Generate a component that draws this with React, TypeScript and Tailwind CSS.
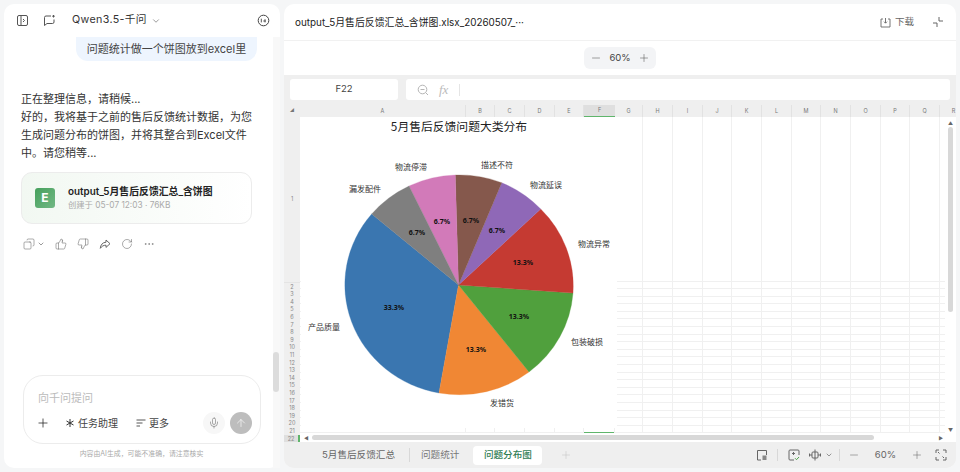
import React from "react";
import { Plus, Minus, ChevronDown, Mic, ArrowUp, Copy, ThumbsUp, ThumbsDown, RotateCw, Ellipsis } from "lucide-react";

const cjk = "font-['Inter','Noto_Sans_CJK_SC',sans-serif]";
const colEdges = [300, 466, 495, 525, 555, 584, 615, 643, 673, 703, 732, 762, 792, 821, 851, 881, 910, 940];
const colNames = ["A","B","C","D","E","F","G","H","I","J","K","L","M","N","O","P","Q","R"];
const rows = Array.from({ length: 22 }, (_, i) => i + 1);

const cx = 458.5, cy = 285, rx = 114.5, ry = 110;
const slices = [
  { c: "#3a76b0", from: [371.7, 214], to: [439, 393] },
  { c: "#f08734", from: [439, 393], to: [529, 372] },
  { c: "#50a03d", from: [529, 372], to: [573, 293] },
  { c: "#c53a32", from: [573, 293], to: [540.7, 209] },
  { c: "#8f68b7", from: [540.7, 209], to: [501.7, 182.7] },
  { c: "#85584c", from: [501.7, 182.7], to: [455.3, 175] },
  { c: "#d27ab9", from: [455.3, 175], to: [409, 186] },
  { c: "#7f7f7f", from: [409, 186], to: [371.7, 214] },
];
// svg origin is at chart's corner (301,117)
const ox = 301, oy = 117;
const labels = [
  { t: "物流停滞", x: 411, y: 167 }, { t: "描述不符", x: 497, y: 165 }, { t: "物流延误", x: 546, y: 185 },
  { t: "漏发配件", x: 365, y: 189 }, { t: "物流异常", x: 594, y: 244 }, { t: "包装破损", x: 587, y: 342 },
  { t: "产品质量", x: 324, y: 327 }, { t: "发错货", x: 502, y: 403 },
];
const pcts = [
  { t: "6.7%", x: 417, y: 232 }, { t: "6.7%", x: 442, y: 221 }, { t: "6.7%", x: 471, y: 220 }, { t: "6.7%", x: 497, y: 230 },
  { t: "13.3%", x: 523, y: 262 }, { t: "13.3%", x: 519, y: 316 }, { t: "13.3%", x: 476, y: 349 }, { t: "33.3%", x: 394, y: 307 },
];

function Chart() {
  return (
    <svg width="316" height="311" viewBox={`${ox} ${oy} 316 311`} className="absolute left-[1px] top-0 bg-white">
      <text x="459" y="131" textAnchor="middle" fontSize="11.8" fill="#222" fontFamily="'Noto Sans CJK SC',sans-serif">5月售后反馈问题大类分布</text>
      {slices.map((s, i) => (
        <path key={i} d={`M${cx} ${cy}L${s.from[0]} ${s.from[1]}A${rx} ${ry} 0 0 0 ${s.to[0]} ${s.to[1]}Z`} fill={s.c} stroke={s.c} strokeWidth="0.3" />
      ))}
      {labels.map((l) => (
        <text key={l.t} x={l.x} y={l.y} dy="3" textAnchor="middle" fontSize="8" fill="#333" fontFamily="'Noto Sans CJK SC',sans-serif">{l.t}</text>
      ))}
      {pcts.map((p, i) => (
        <text key={i} x={p.x} y={p.y} dy="2.6" textAnchor="middle" fontSize="7" fontWeight="700" fill="#111" fontFamily="'Noto Sans',sans-serif">{p.t}</text>
      ))}
    </svg>
  );
}

function PanelIcon() {
  return (
    <svg width="13" height="13" viewBox="0 0 13 13" fill="none" stroke="#555" strokeWidth="1">
      <rect x="1.5" y="1.5" width="10" height="10" rx="1.5" />
      <path d="M5 1.5v10M7 5l1.5 1.5L7 8" />
    </svg>
  );
}
function ChatIcon() {
  return (
    <svg width="13" height="13" viewBox="0 0 13 13" fill="none" stroke="#555" strokeWidth="1">
      <path d="M8 2H3a1.5 1.5 0 0 0-1.5 1.5v8L4 9.5h5.5A1.5 1.5 0 0 0 11 8V5.5" />
      <path d="M10.5 1v2.500M9.200 2.200h2.600" />
    </svg>
  );
}
function CircleOne() {
  return (
    <svg width="13" height="13" viewBox="0 0 13 13" fill="none" stroke="#444" strokeWidth="1">
      <circle cx="6.5" cy="6.5" r="5.3" />
      <path d="M4.300 4.700v3.700M6.300 7h2.500M8 5.200v3.200" strokeWidth=".9" />
    </svg>
  );
}
function ForwardIcon() {
  return (
    <svg width="12" height="12" viewBox="0 0 12 12" fill="none" stroke="#666" strokeWidth="1" strokeLinejoin="round">
      <path d="M7 2l4 3.700L7 9.400V7.200C4.500 7.200 2.800 8.200 1.300 10.300 1.500 7 3.500 4.400 7 4.200z" />
    </svg>
  );
}
function DownloadIcon() {
  return (
    <svg width="11" height="11" viewBox="0 0 11 11" fill="none" stroke="#666" strokeWidth=".9">
      <path d="M3 2H1v8h9V2H8M5.5 1v5M4 4.700l1.500 1.500L7 4.700" />
    </svg>
  );
}
function CollapseIcon() {
  return (
    <svg width="12" height="12" viewBox="0 0 12 12" fill="none" stroke="#666" strokeWidth="1">
      <path d="M7 1v4h4M1 7h4v4" />
    </svg>
  );
}
function SparkIcon() {
  return (
    <svg width="10" height="10" viewBox="0 0 10 10" fill="none" stroke="#333" strokeWidth="1">
      <path d="M5 1v8M1.500 3l7 4M8.500 3l-7 4" />
    </svg>
  );
}
function LinesIcon() {
  return (
    <svg width="10" height="10" viewBox="0 0 10 10" fill="none" stroke="#444" strokeWidth=".9">
      <path d="M.5 2h9M.5 5h6M.5 8h3.500" />
    </svg>
  );
}
function SearchFx() {
  return (
    <svg width="12" height="12" viewBox="0 0 12 12" fill="none" stroke="#b5b5b5" strokeWidth="1">
      <circle cx="5.5" cy="5.5" r="4.3" /><path d="M8.700 8.700 11 11M3.500 5.500h4" />
    </svg>
  );
}
function PageIcon() {
  return (
    <svg width="12" height="12" viewBox="0 0 12 12" fill="none" stroke="#666" strokeWidth="1">
      <path d="M5 11H1.500V1.500h9V6" /><rect x="6.500" y="6.500" width="4" height="4.500" fill="#888" stroke="none" />
    </svg>
  );
}
function CheckBoxIcon() {
  return (
    <svg width="12" height="12" viewBox="0 0 12 12" fill="none" stroke="#666" strokeWidth="1">
      <path d="M6 11H2a1 1 0 0 1-1-1V2a1 1 0 0 1 1-1h8a1 1 0 0 1 1 1v4M4 4.500h3M5.500 3v3" />
      <path d="m7 9.200 1.500 1.500L11 8" stroke="#4ea24a" />
    </svg>
  );
}
function MoveIcon() {
  return (
    <svg width="12" height="12" viewBox="0 0 12 12" fill="none" stroke="#666" strokeWidth="1">
      <rect x="3" y="3" width="6" height="6" rx="1" /><path d="M6 .5v11M.5 6H3M9 6h2.500M.5 4.500v3M11.500 4.500v3" />
    </svg>
  );
}
function ExpandIcon() {
  return (
    <svg width="12" height="12" viewBox="0 0 12 12" fill="none" stroke="#666" strokeWidth="1">
      <path d="M1 4V1h3M8 1h3v3M11 8v3H8M4 11H1V8M3 3l1.500 1.500M9 9 7.500 7.500" />
    </svg>
  );
}

export default function App() {
  return (
    <div className={`flex h-[472px] w-[960px] gap-[4px] overflow-hidden bg-[#f5f6f7] p-[4px] ${cjk}`}>
      {/* Chat */}
      <div className="flex w-[276px] flex-col rounded-[10px] bg-white">
        <div className="flex h-[33px] shrink-0 items-center pl-[12px] pr-[10px]">
          <PanelIcon />
          <span className="ml-[14px]"><ChatIcon /></span>
          <span className="ml-[16px] text-[10.7px] tracking-[0.35px] text-[#333]">Qwen3.5-千问</span>
          <ChevronDown size={10} className="ml-[4px] text-[#888]" />
          <span className="ml-auto"><CircleOne /></span>
        </div>
        <div className="flex min-h-0 flex-1">
          <div className="flex min-w-0 flex-1 flex-col overflow-hidden pb-[4px]">
            <div className="flex justify-end pr-[16px]">
              <div className="flex h-[24px] w-[181px] items-center justify-center rounded-b-[12px] bg-[#eef5fe] text-[11px] text-[#444]">问题统计做一个饼图放到excel里</div>
            </div>
            <div className="ml-[17px] mt-[29px] w-[240px] text-[11px] leading-[18px] text-[#333]">
              <p>正在整理信息，请稍候...</p>
              <p>好的，我将基于之前的售后反馈统计数据，为您</p>
              <p>生成问题分布的饼图，并将其整合到Excel文件</p>
              <p>中。请您稍等...</p>
            </div>
            <div className="ml-[17px] mt-[10px] flex h-[52px] w-[231px] items-center rounded-[11px] border border-[#ececec] bg-gradient-to-r from-[#f2f8f2] to-white pl-[13px]">
              <div className="flex h-[20px] w-[20px] items-center justify-center rounded-[3px] bg-gradient-to-br from-[#45a05c] to-[#72b885] text-[12px] font-bold text-white">E</div>
              <div className="ml-[13px] flex flex-col gap-[2px]">
                <span className="text-[9.85px] font-semibold leading-[13px] text-[#222]">output_5月售后反馈汇总_含饼图</span>
                <span className="text-[8.3px] leading-[11px] text-[#aaa]">创建于 05-07 12:03 · 76KB</span>
              </div>
            </div>
            <div className="ml-[19px] mt-[14px] flex items-center text-[#666]">
              <Copy size={12} strokeWidth={1.1} className="-scale-x-100" />
              <ChevronDown size={8} className="ml-[2px]" />
              <ThumbsUp size={12} strokeWidth={1.1} className="ml-[10px]" />
              <ThumbsDown size={12} strokeWidth={1.1} className="ml-[10px]" />
              <span className="ml-[10px]"><ForwardIcon /></span>
              <RotateCw size={12} strokeWidth={1.1} className="ml-[10px]" />
              <Ellipsis size={12} strokeWidth={1.1} className="ml-[10px]" />
            </div>
            <div className="mt-auto ml-[19px] flex h-[69px] w-[238px] flex-col rounded-[20px] border border-[#ececec] pl-[14px] pr-[8px] pt-[15px]">
              <span className="text-[11px] leading-[14px] text-[#bbb]">向千问提问</span>
              <div className="mt-[7px] flex items-center text-[10px] text-[#444]">
                <Plus size={14} strokeWidth={1.3} className="-ml-[2px] text-[#222]" />
                <span className="ml-[15px]"><SparkIcon /></span>
                <span className="ml-[3px]">任务助理</span>
                <span className="ml-[18px]"><LinesIcon /></span>
                <span className="ml-[3px]">更多</span>
                <span className="ml-auto flex h-[22px] w-[22px] items-center justify-center rounded-full bg-[#f7f7f7]">
                  <Mic size={12} strokeWidth={1.1} className="text-[#666]" />
                </span>
                <span className="ml-[5px] flex h-[22px] w-[22px] items-center justify-center rounded-full bg-[#bdbdbd]">
                  <ArrowUp size={12} strokeWidth={1.3} className="text-white" />
                </span>
              </div>
            </div>
            <div className="flex h-[20px] shrink-0 items-center justify-center pl-[6px] text-[6.9px] text-[#aaa]">内容由AI生成，可能不准确，请注意核实</div>
          </div>
          <div className="flex w-[7px] shrink-0 flex-col justify-end bg-[#f8f8f8] pb-[76px]">
            <div className="h-[40px] w-[6px] rounded-full bg-[#dcdcdc]" />
          </div>
        </div>
      </div>

      {/* Preview */}
      <div className="flex min-w-0 flex-1 flex-col overflow-hidden rounded-[10px] bg-white">
        <div className="flex h-[37px] shrink-0 items-center border-b border-[#f1f1f1] pl-[11px] pr-[12px]">
          <span className="text-[9.9px] text-[#222]">output_5月售后反馈汇总_含饼图.xlsx_20260507_···</span>
          <span className="ml-auto"><DownloadIcon /></span>
          <span className="ml-[4px] text-[9.5px] text-[#666]">下载</span>
          <span className="ml-[18px]"><CollapseIcon /></span>
        </div>
        <div className="flex h-[34px] shrink-0 items-center justify-center">
          <div className="flex h-[22px] w-[72px] items-center justify-center rounded-[6px] bg-[#f3f4f6] text-[#555]">
            <Minus size={12} strokeWidth={1.1} />
            <span className="mx-[7px] text-[9.5px] text-[#444]">60%</span>
            <Plus size={12} strokeWidth={1.1} />
          </div>
        </div>
        <div className="flex min-h-0 flex-1 flex-col bg-[#efefef]">
          <div className="flex h-[30px] shrink-0 items-start gap-[8px] pl-[6px] pr-[6px] pt-[4px]">
            <div className="flex h-[21px] w-[108px] items-center justify-center rounded-[3px] bg-white text-[9.5px] text-[#444]">F22</div>
            <div className="flex h-[21px] flex-1 items-center rounded-[3px] bg-white pl-[11px]">
              <SearchFx />
              <span className="ml-[10px] font-['Liberation_Serif',serif] text-[13px] italic text-[#bbb]">fx</span>
              <span className="ml-[11px] h-[12px] w-px bg-[#e5e5e5]" />
            </div>
          </div>
          <div className="flex h-[12px] shrink-0 overflow-hidden text-[5.5px] text-[#777]">
            <div className="flex w-[16px] shrink-0 items-center justify-center text-[4px]">◢</div>
            {colNames.map((n, i) => (
              <div
                key={n}
                style={{ width: (colEdges[i + 1] ?? 968) - colEdges[i] }}
                className={`flex shrink-0 items-center justify-center ${n === "F" ? "border-b border-[#5fb56b] bg-[#dfdfdf]" : "border-r border-[#e2e2e2]"}`}
              >
                {n}
              </div>
            ))}
          </div>
          <div className="flex min-h-0 flex-1">
            <div className="flex w-[16px] shrink-0 flex-col overflow-hidden text-[5.5px] text-[#888]">
              <div className="flex h-[166px] shrink-0 items-center justify-center border-b border-[#e4e4e4]">1</div>
              {rows.slice(1).map((r) => (
                <div key={r} className={`flex h-[7.6px] shrink-0 items-center justify-center ${r === 22 ? "border-r-2 border-[#5fb56b] bg-[#dfdfdf]" : ""}`}>{r}</div>
              ))}
              <div className="flex h-[7.6px] shrink-0 items-center justify-center">23</div>
            </div>
            <div className="relative min-w-0 flex-1 overflow-hidden bg-white">
              {/* cells */}
              <div className="flex h-[316px]">
                {colNames.map((n, i) => (
                  <div
                    key={n}
                    style={{ width: (colEdges[i + 1] ?? 956) - colEdges[i] }}
                    className="flex flex-col border-r border-[#f0f0f0]"
                  >
                    <div className="h-[164.5px] shrink-0 border-b border-[#f0f0f0]" />
                    {rows.slice(1).map((r) => (
                      <div key={r} className={`h-[7.6px] shrink-0 border-b ${n === "F" && r === 21 ? "border-[#5fb56b]" : "border-[#f0f0f0]"}`} />
                    ))}
                  </div>
                ))}
              </div>
              <Chart />
              {/* vertical scrollbar */}
              <div className="absolute bottom-[9px] right-0 top-0 flex w-[11px] flex-col items-center bg-white pt-[3px] text-[#666]">
                <span className="text-[5px] leading-[6px]">▲</span>
                <div className="mt-[1px] h-[185px] w-[5px] rounded-full bg-[#d8d8d8]" />
                <span className="mt-auto text-[5px] leading-[6px]">▼</span>
              </div>
              {/* horizontal scrollbar */}
              <div className="absolute inset-x-0 bottom-0 flex h-[9px] items-center bg-white pl-[4px] text-[#666]">
                <span className="text-[5px] leading-[6px]">◀</span>
                <div className="ml-[3px] h-[5px] w-[562px] rounded-full bg-[#d8d8d8]" />
                <span className="ml-auto mr-[13px] text-[5px] leading-[6px]">▶</span>
              </div>
            </div>
          </div>
          <div className="flex h-[26px] shrink-0 items-center bg-[#efefef] pl-[38px] pr-[9px]">
            <span className="text-[9.6px] text-[#666]">5月售后反馈汇总</span>
            <span className="ml-[14px] h-[14px] w-px bg-[#d8d8d8]" />
            <span className="ml-[11px] text-[9.6px] text-[#777]">问题统计</span>
            <span className="ml-[14px] flex h-[19px] w-[69px] items-center justify-center rounded-[4px] bg-white text-[9.6px] font-medium text-[#2f7d55]">问题分布图</span>
            <Plus size={12} strokeWidth={1.2} className="ml-[18px] text-[#c8c8c8]" />
            <span className="ml-auto"><PageIcon /></span>
            <span className="ml-[9px] h-[12px] w-px bg-[#d8d8d8]" />
            <span className="ml-[10px]"><CheckBoxIcon /></span>
            <span className="ml-[9px]"><MoveIcon /></span>
            <ChevronDown size={8} className="ml-[4px] text-[#666]" />
            <span className="ml-[6px] h-[12px] w-px bg-[#d8d8d8]" />
            <Minus size={12} strokeWidth={1.1} className="ml-[8px] text-[#666]" />
            <span className="ml-[15px] text-[9.5px] text-[#666]">60%</span>
            <Plus size={12} strokeWidth={1.1} className="ml-[15px] text-[#666]" />
            <span className="ml-[12px]"><ExpandIcon /></span>
          </div>
        </div>
      </div>
    </div>
  );
}
